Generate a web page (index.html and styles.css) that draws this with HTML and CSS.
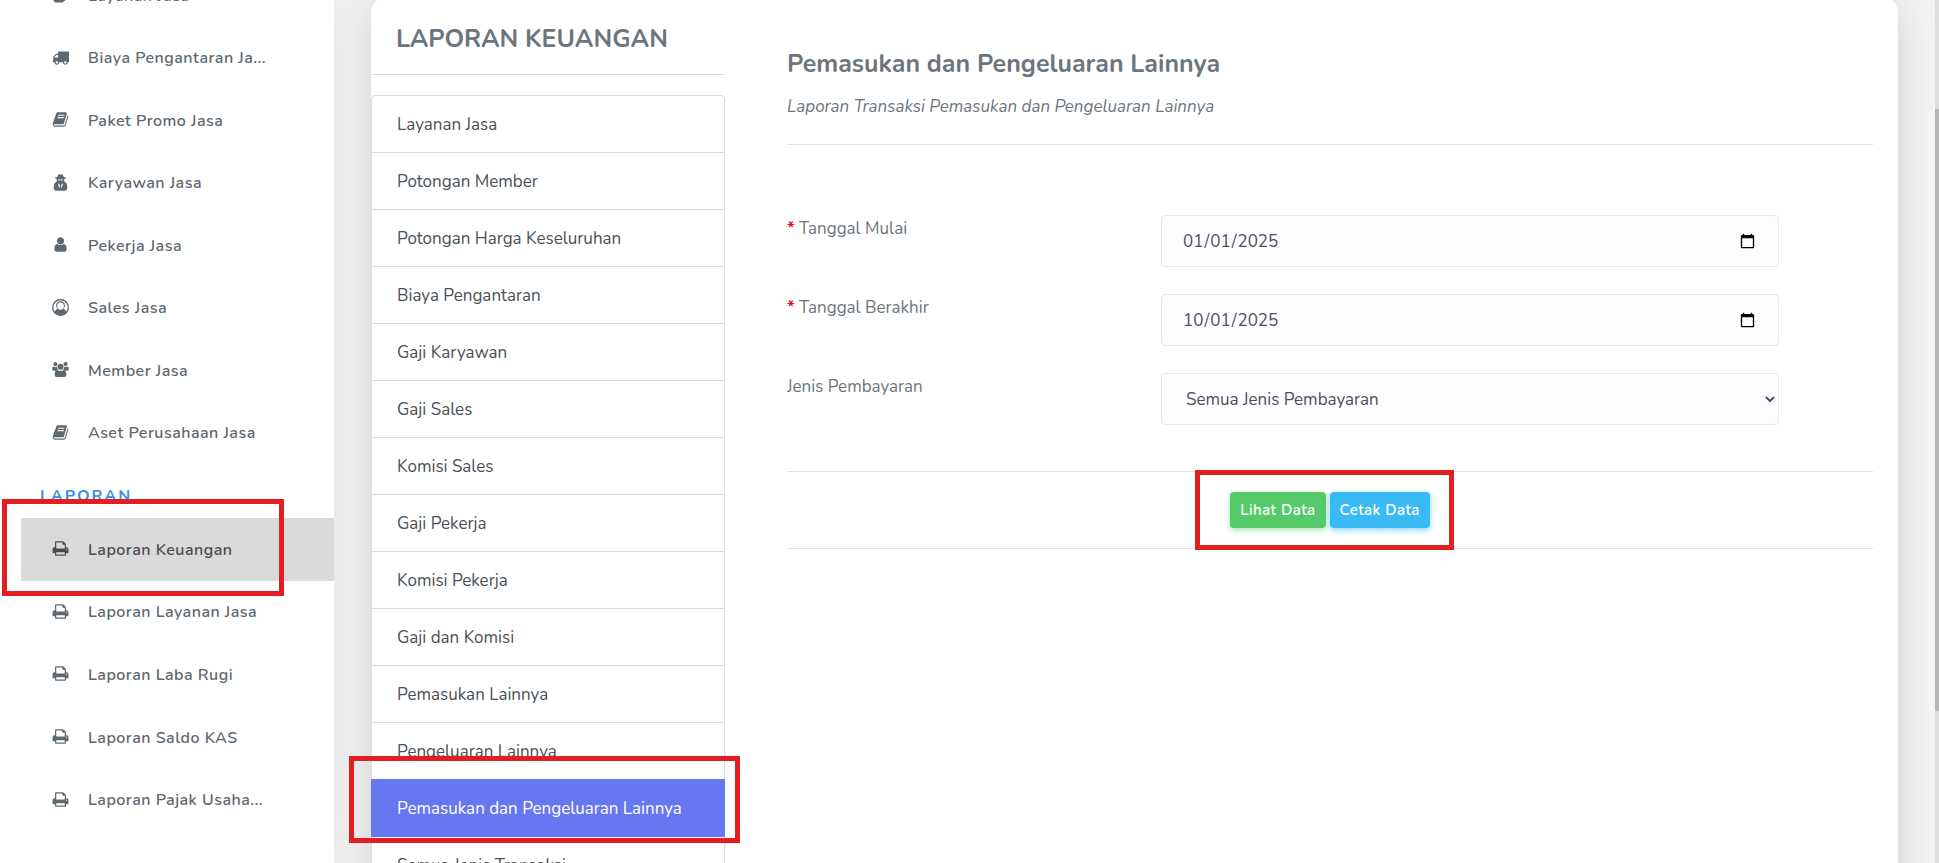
FILE: index.html
```
<!DOCTYPE html>
<html lang="id">
<head>
    <meta charset="UTF-8">
    <meta name="viewport" content="width=device-width, initial-scale=1.0">
    <title>Laporan Keuangan</title>
    <link rel="stylesheet" href="styles.css">
</head>
<body>
    <svg class="sprite" aria-hidden="true">
        <symbol id="i-service" viewBox="0 0 16 16"><path d="M2 3h12l1.500 5L13 13l-3 2.500H3L1.500 14 1 8z"/></symbol>
        <symbol id="i-truck" viewBox="0 0 1792 1792"><path d="M640 1408q0-52-38-90t-90-38-90 38-38 90 38 90 90 38 90-38 38-90zm-384-512h384v-256h-158q-13 0-22 9l-195 195q-9 9-9 22v30zm1280 512q0-52-38-90t-90-38-90 38-38 90 38 90 90 38 90-38 38-90zm256-1088v1024q0 15-4 26.5t-13.5 18.5-16.5 11.5-23.5 6-22.5 2-25.5 0-22.5-.5q0 106-75 181t-181 75-181-75-75-181h-384q0 106-75 181t-181 75-181-75-75-181h-64q-3 0-22.5.5t-25.5 0-22.5-2-23.5-6-16.5-11.5-13.5-18.5-4-26.5q0-26 19-45t45-19v-320q0-8-.5-35t0-38 2.5-34.5 6.5-37 14-30.5 22.5-30l198-198q19-19 50.5-32t58.5-13h160v-192q0-26 19-45t45-19h1024q26 0 45 19t19 45z"/></symbol>
        <symbol id="i-book" viewBox="0 0 1792 1792"><path d="M1703 478q40 57 18 129l-275 906q-19 64-76.5 107.5t-122.5 43.5h-923q-77 0-148.5-53.5t-99.5-131.5q-24-67-2-127 0-4 3-27t4-37q1-8-3-21.5t-3-19.5q2-11 8-21t16.5-23.5 16.5-23.5q23-38 45-91.5t30-91.5q3-10 .5-30t-.5-28q3-11 17-28t17-23q21-36 42-92t25-90q1-9-2.5-32t.5-28q4-13 22-30.5t22-22.5q19-26 42.5-84.5t27.5-96.5q1-8-3-25.5t-2-26.5q2-8 9-18t18-23 17-21q8-12 16.5-30.5t15-35 16-36 19.5-32 26.5-23.5 36-11.5 47.5 5.5l-1 3q38-9 51-9h761q74 0 114 56t18 130l-274 906q-36 119-71.5 153.5t-128.5 34.5h-869q-27 0-38 15-11 16-1 43 24 70 144 70h923q29 0 56-15.5t35-41.5l300-987q7-22 5-57 38 15 59 43zm-1064 2q-4 13 2 22.5t20 9.5h608q13 0 25.5-9.5t16.5-22.5l21-64q4-13-2-22.5t-20-9.5h-608q-13 0-25.5 9.5t-16.5 22.5zm-83 256q-4 13 2 22.5t20 9.5h608q13 0 25.5-9.5t16.5-22.5l21-64q4-13-2-22.5t-20-9.5h-608q-13 0-25.5 9.5t-16.5 22.5z"/></symbol>
        <symbol id="i-secret" viewBox="0 0 16 16"><path fill-rule="evenodd" d="M2.500 3.800Q3.500 3 5 2.800L5.800.8Q6.200 0 7 .3l1 .4 1-.4q.8-.3 1.200.5l.8 2q1.500.2 2.500 1-.6.5-2 .8.2 1.400-.1 2.200.9.900 1.700 1.400Q14.400 9.400 14.400 13.500q0 2.300-2.200 2.300H3.800q-2.200 0-2.200-2.300 0-4.100 1.300-5.300.8-.5 1.700-1.400-.3-.8-.1-2.200-1.400-.3-2-.8zM5.700 5.200q.1 1.100.9 1.100t1.100-.9h.6q.3.900 1.100.9t.9-1.100zM5.600 8.600l1.200 5 .7-3.200zM10.400 8.600l-1.900 1.800.7 3.200z"/></symbol>
        <symbol id="i-user" viewBox="0 0 1792 1792"><path d="M1536 1399q0 109-62.5 187t-150.5 78h-854q-88 0-150.5-78t-62.5-187q0-85 8.5-160.5t31.5-152 58.5-131 94-89 134.5-34.5q131 128 313 128t313-128q76 0 134.5 34.5t94 89 58.5 131 31.500 152 8.500 160.500zm-256-887q0 159-112.500 271.500t-271.500 112.500-271.500-112.500-112.500-271.500 112.500-271.500 271.500-112.500 271.500 112.500 112.500 271.500z"/></symbol>
        <symbol id="i-circle" viewBox="0 0 16 16"><path fill-rule="evenodd" d="M8 0a8 8 0 1 1 0 16A8 8 0 0 1 8 0zM8 1.400A6.600 6.600 0 0 0 2.700 12q.5-2.400 2.400-2.900A4.300 4.300 0 0 1 3.800 6.200C3.800 3.800 5.700 2.200 8 2.200s4.200 1.600 4.200 4A4.300 4.300 0 0 1 10.900 9.100q1.900.5 2.400 2.900A6.600 6.600 0 0 0 8 1.400zM8 3.200a3.200 3.400 0 1 0 0 6.800A3.200 3.400 0 0 0 8 3.200z"/></symbol>
        <symbol id="i-users" viewBox="0 0 18 16"><circle cx="3.600" cy="2.300" r="2.200"/><circle cx="14.400" cy="2.300" r="2.200"/><circle cx="9" cy="5" r="3.200"/><path d="M1.600 4.800q2 1.200 3.600.2 0 2 1.200 3.200-1.500 0-2.400 1H2Q.2 9.200.2 7.600q0-2.600 1.400-2.800zM16.400 4.800q-2 1.200-3.600.2 0 2-1.200 3.200 1.500 0 2.400 1h2q1.800 0 1.800-1.600 0-2.600-1.400-2.800zM5.600 8.400q3.400 2.200 6.800 0 2.800.2 2.800 5.200 0 2.400-2.200 2.400H5q-2.200 0-2.200-2.400 0-5 2.800-5.200z"/></symbol>
        <symbol id="i-print" viewBox="0 0 1792 1792"><path d="M448 1536h896v-256h-896v256zm0-640h896v-384h-160q-40 0-68-28t-28-68v-160h-640v640zm1152 64q0-26-19-45t-45-19-45 19-19 45 19 45 45 19 45-19 19-45zm128 0v416q0 13-9.500 22.500t-22.500 9.500h-224v160q0 40-28 68t-68 28h-960q-40 0-68-28t-28-68v-160h-224q-13 0-22.500-9.500t-9.500-22.500v-416q0-79 56.500-135.500t135.500-56.500h64v-544q0-40 28-68t68-28h672q40 0 88 20t76 48l152 152q28 28 48 76t20 88v256h64q79 0 135.500 56.500t56.500 135.500z"/></symbol>
    </svg>

    <aside class="sidebar">
        <ul class="menu">
            <li><a href="#"><svg><use href="#i-service"/></svg>Layanan Jasa</a></li>
            <li><a href="#"><svg><use href="#i-truck"/></svg>Biaya Pengantaran Ja...</a></li>
            <li><a href="#"><svg><use href="#i-book"/></svg>Paket Promo Jasa</a></li>
            <li><a href="#"><svg><use href="#i-secret"/></svg>Karyawan Jasa</a></li>
            <li><a href="#"><svg><use href="#i-user"/></svg>Pekerja Jasa</a></li>
            <li><a href="#"><svg><use href="#i-circle"/></svg>Sales Jasa</a></li>
            <li><a href="#"><svg><use href="#i-users"/></svg>Member Jasa</a></li>
            <li><a href="#"><svg><use href="#i-book"/></svg>Aset Perusahaan Jasa</a></li>
        </ul>
        <h6 class="menu-header">LAPORAN</h6>
        <ul class="menu menu-laporan">
            <li><a href="#" class="active"><svg><use href="#i-print"/></svg>Laporan Keuangan</a></li>
            <li><a href="#"><svg><use href="#i-print"/></svg>Laporan Layanan Jasa</a></li>
            <li><a href="#"><svg><use href="#i-print"/></svg>Laporan Laba Rugi</a></li>
            <li><a href="#"><svg><use href="#i-print"/></svg>Laporan Saldo KAS</a></li>
            <li><a href="#"><svg><use href="#i-print"/></svg>Laporan Pajak Usaha...</a></li>
        </ul>
        <div class="mark mark-menu"></div>
    </aside>

    <main class="content">
        <div class="card">
            <nav class="reports">
                <h4>LAPORAN KEUANGAN</h4>
                <div class="list-group">
                    <a href="#">Layanan Jasa</a>
                    <a href="#">Potongan Member</a>
                    <a href="#">Potongan Harga Keseluruhan</a>
                    <a href="#">Biaya Pengantaran</a>
                    <a href="#">Gaji Karyawan</a>
                    <a href="#">Gaji Sales</a>
                    <a href="#">Komisi Sales</a>
                    <a href="#">Gaji Pekerja</a>
                    <a href="#">Komisi Pekerja</a>
                    <a href="#">Gaji dan Komisi</a>
                    <a href="#">Pemasukan Lainnya</a>
                    <a href="#">Pengeluaran Lainnya</a>
                    <a href="#" class="active">Pemasukan dan Pengeluaran Lainnya<span class="mark mark-list"></span></a>
                    <a href="#">Semua Jenis Transaksi</a>
                </div>
            </nav>
            <section class="panel">
                <h5>Pemasukan dan Pengeluaran Lainnya</h5>
                <p class="subtitle">Laporan Transaksi Pemasukan dan Pengeluaran Lainnya</p>
                <form>
                    <div class="fields">
                        <label for="mulai"><span class="req">*</span> Tanggal Mulai</label>
                        <input type="date" id="mulai" value="2025-01-01">
                        <label for="berakhir"><span class="req">*</span> Tanggal Berakhir</label>
                        <input type="date" id="berakhir" value="2025-10-01">
                        <label for="jenis">Jenis Pembayaran</label>
                        <select id="jenis">
                            <option>Semua Jenis Pembayaran</option>
                        </select>
                    </div>
                    <div class="actions">
                        <div class="buttons">
                            <button type="button" class="btn-green">Lihat Data</button>
                            <button type="button" class="btn-blue">Cetak Data</button>
                            <div class="mark mark-buttons"></div>
                        </div>
                    </div>
                </form>
            </section>
        </div>
    </main>
    <div class="scrollbar"><div class="thumb"></div></div>
</body>
</html>
```

FILE: styles.css
```
* {
    box-sizing: border-box;
}
body {
    margin: 0;
    display: flex;
    height: 100vh;
    overflow: hidden;
    background-color: #f4f4f4;
    color: #6c757d;
    font-family: Nunito, "Open Sans", sans-serif;
    font-size: 17px;
}
a {
    color: inherit;
    text-decoration: none;
}
.sprite {
    display: none;
}

/* sidebar */
.sidebar {
    position: relative;
    width: 334px;
    flex-shrink: 0;
    background: white;
    box-shadow: 0 0 40px rgba(0, 0, 0, 0.08);
}
.menu {
    list-style: none;
    margin: -36px 0 0;
    padding: 0 0 0 21px;
    min-height: 500px;
    display: grid;
    grid-auto-rows: 1fr;
}
.menu-laporan {
    margin: 0;
    min-height: 313px;
}
.menu a {
    display: flex;
    align-items: center;
    height: 100%;
    padding: 1px 0 0 31px;
    font-size: 16px;
    font-weight: 600;
    letter-spacing: 0.03em;
    color: #60686f;
}
.menu a.active {
    background-color: #dadada;
    color: #484c50;
}
.menu svg {
    width: 17px;
    height: 17px;
    margin: 0 19px 2px 0;
    fill: currentColor;
}
.menu-header {
    margin: 0;
    padding: 21px 0 11px 40px;
    line-height: 22px;
    font-size: 16px;
    font-weight: 700;
    letter-spacing: 2px;
    color: #3490e6;
}

/* card */
.content {
    flex: 1;
    padding: 0 37px;
}
.card {
    display: flex;
    min-height: 900px;
    margin-top: -2px;
    background: white;
    border-radius: 14px;
    box-shadow: 0 4px 40px rgba(0, 0, 0, 0.15);
}
.reports {
    width: 354px;
    flex-shrink: 0;
}
.reports h4 {
    margin: 0 0 20px;
    padding: 25px 25px 19px;
    line-height: 32px;
    font-size: 25px;
    font-weight: 700;
    border-bottom: 1px solid #e0e1e3;
}
.list-group {
    border: 1px solid #dcdddf;
    border-radius: 4px;
}
.list-group a {
    display: block;
    padding: 15px 25px 13px;
    line-height: 28px;
    color: #495057;
    border-bottom: 1px solid #dcdddf;
}
.list-group a.active {
    position: relative;
    margin: -1px -1px 0;
    padding: 16px 26px 14px;
    color: white;
    background-color: #6777ef;
    border-bottom: 0;
}

/* form panel */
.panel {
    flex: 1;
    padding: 49px 25px 0 62px;
}
.panel h5 {
    margin: 0;
    line-height: 34px;
    font-size: 25px;
    font-weight: 700;
}
.subtitle {
    margin: 0;
    padding: 12px 0 23px;
    line-height: 28px;
    font-style: italic;
    border-bottom: 1px solid #e0e1e3;
}
.fields {
    display: grid;
    grid-template-columns: 374fr 618fr 94fr;
    row-gap: 27px;
    padding: 70px 0 46px;
}
.fields label {
    grid-column: 1;
    line-height: 28px;
}
.req {
    color: #e3101c;
    font-weight: 700;
}
.fields input,
.fields select {
    grid-column: 2;
    width: 100%;
    height: 52px;
    padding: 0 20px;
    font-family: inherit;
    font-size: 17px;
    color: #495057;
    background-color: #fdfdff;
    border: 1px solid #e4e6f0;
    border-radius: 4px;
}
.actions {
    display: flex;
    justify-content: center;
    padding: 20px 0;
    border-top: 1px solid #e0e1e3;
    border-bottom: 1px solid #e0e1e3;
}
.buttons {
    position: relative;
    display: flex;
    gap: 4px;
}
.buttons button {
    height: 36px;
    padding: 0 10px;
    font-family: inherit;
    font-size: 15px;
    font-weight: 600;
    letter-spacing: 0.03em;
    color: white;
    border: 0;
    border-radius: 4px;
}
.buttons .btn-green {
    background-color: #54ca68;
    box-shadow: 0 2px 6px #a8e4b3;
}
.buttons .btn-blue {
    background-color: #3abaf4;
    box-shadow: 0 2px 6px #82d3f8;
}

/* red highlight frames */
.mark {
    position: absolute;
    border: 5px solid #e31e20;
    pointer-events: none;
}
.mark-menu {
    left: 2px;
    top: 499px;
    width: 282px;
    height: 97px;
}
.mark-list {
    left: -22px;
    top: -23px;
    width: 391px;
    height: 87px;
}
.mark-buttons {
    inset: -22px -24px -22px -35px;
}

/* page scrollbar */
.scrollbar {
    width: 4px;
    height: 100%;
    padding-top: 109px;
    background-color: #dedede;
}
.thumb {
    height: 602px;
    background-color: #b5b5b5;
}
```
